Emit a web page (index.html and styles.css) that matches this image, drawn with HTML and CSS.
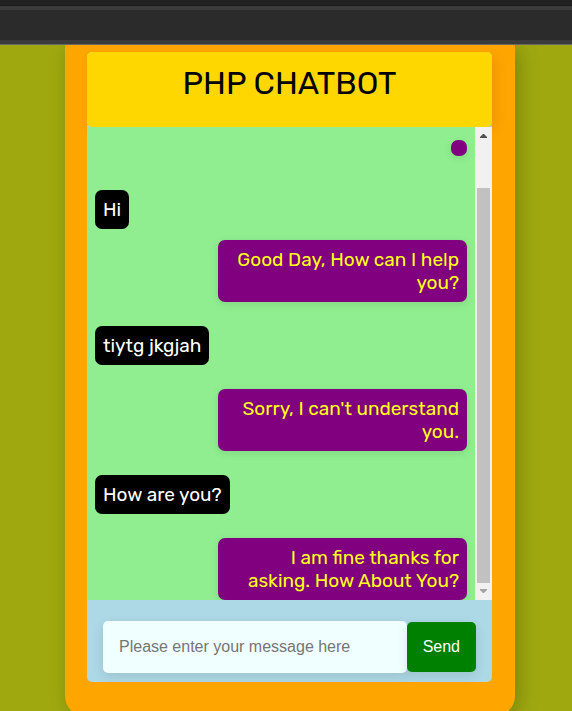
FILE: index.html
```html
<!DOCTYPE html>
<html lang="en">
<head>
<meta charset="utf-8">
<meta name="viewport" content="width=device-width, initial-scale=1">
<title>PHP Chatbot</title>
<link rel="stylesheet" href="styles.css">
</head>
<body>
<div class="topbar" aria-hidden="true">
  <div class="topbar-tabs"></div>
  <div class="topbar-row"></div>
</div>
<main class="page">
  <section class="card">
    <div class="chat">
      <header class="chat-header"><h1>PHP CHATBOT</h1></header>
      <div class="chat-body">
        <div class="messages">
          <p class="bubble bot empty"></p>
          <p class="bubble user first">Hi</p>
          <p class="bubble bot close">Good Day, How can I help you?</p>
          <p class="bubble user">tiytg jkgjah</p>
          <p class="bubble bot">Sorry, I can't understand you.</p>
          <p class="bubble user">How are you?</p>
          <p class="bubble bot">I am fine thanks for asking. How About You?</p>
        </div>
        <div class="scrollbar" aria-hidden="true">
          <svg class="arrow" viewBox="0 0 17 17"><path d="M5 11h7v-1L9 7H8L5 10z" fill="#505050"/></svg>
          <div class="track"><div class="thumb"></div></div>
          <svg class="arrow" viewBox="0 0 17 17"><path d="M5 6h7v1L9 10H8L5 7z" fill="#a3a3a3"/></svg>
        </div>
      </div>
      <form class="composer">
        <input class="field" type="text" placeholder="Please enter your message here" aria-label="Message">
        <button class="send" type="button">Send</button>
      </form>
    </div>
  </section>
</main>
</body>
</html>
```

FILE: styles.css
```css
* {
  box-sizing: border-box;
}

html {
  overflow: hidden;
}

body {
  margin: 0;
  background: #9fa90f;
  font-family: Rubik, Roboto, "Liberation Sans", sans-serif;
}

.topbar {
  position: relative;
  z-index: 1;
  border-bottom: 1px solid #686868;
}

.topbar-tabs {
  height: 6px;
  background: #212121;
  border-bottom: 1px solid #1b1b1b;
}

.topbar-row {
  height: 38px;
  background: #2b2b2b;
  border: solid #3b3b3b;
  border-width: 4px 0;
}

.page {
  padding-left: 8px;
}

.card {
  max-width: 450px;
  margin: 0 auto;
  padding: 7px 23px 34px 22px;
  background: orange;
  border-radius: 0 0 20px 20px;
  box-shadow: 4px 4px 20px rgba(0, 0, 0, 0.22);
}

.chat {
  background: lightblue;
  border-radius: 5px;
}

.chat-header {
  padding: 12px 16px 25px;
  background: gold;
  border-radius: 5px;
  box-shadow: 4px 4px 12px rgba(0, 0, 0, 0.08);
  text-align: center;
}

.chat-header h1 {
  margin: 0;
  font-size: 32px;
  font-weight: 400;
  line-height: 38px;
}

.chat-body {
  position: relative;
  display: flex;
  overflow: hidden;
}

.messages {
  flex: 1;
  display: flex;
  flex-direction: column;
  padding: 13px 8px 0;
  background: lightgreen;
}

.bubble {
  margin: 24px 0 0;
  padding: 8px;
  border-radius: 7px;
  font-size: 19px;
  line-height: 23px;
}

.user {
  align-self: flex-start;
  background: black;
  color: white;
}

.bot {
  align-self: flex-end;
  width: 67%;
  background: purple;
  color: #ffff1a;
  text-align: right;
  box-shadow: 0 2px 8px rgba(0, 0, 0, 0.1);
}

.bubble.empty {
  width: auto;
  margin-top: 0;
}

.bubble.first {
  margin-top: 34px;
}

.bubble.close {
  margin-top: 11px;
}

.scrollbar {
  width: 17px;
  display: flex;
  flex-direction: column;
  background: #f1f1f1;
}

.arrow {
  display: block;
  width: 17px;
  height: 17px;
}

.track {
  flex: 1;
  display: flex;
  padding: 44px 2px 0;
}

.thumb {
  flex: 1;
  background: #c1c1c1;
}

.composer {
  display: flex;
  align-items: center;
  padding: 21px 16px 9px;
}

.field,
.send {
  margin: 0;
  border: 0;
  border-radius: 5px;
  font-family: "Liberation Sans", Arial, sans-serif;
  font-size: 16px;
  line-height: 18px;
  box-shadow: 0 4px 12px rgba(0, 0, 0, 0.1);
}

.field {
  flex: 1;
  min-width: 0;
  padding: 17px 16px;
  background: azure;
}

.field::placeholder {
  color: #757575;
}

.send {
  padding: 16px;
  background: green;
  color: white;
}
```
